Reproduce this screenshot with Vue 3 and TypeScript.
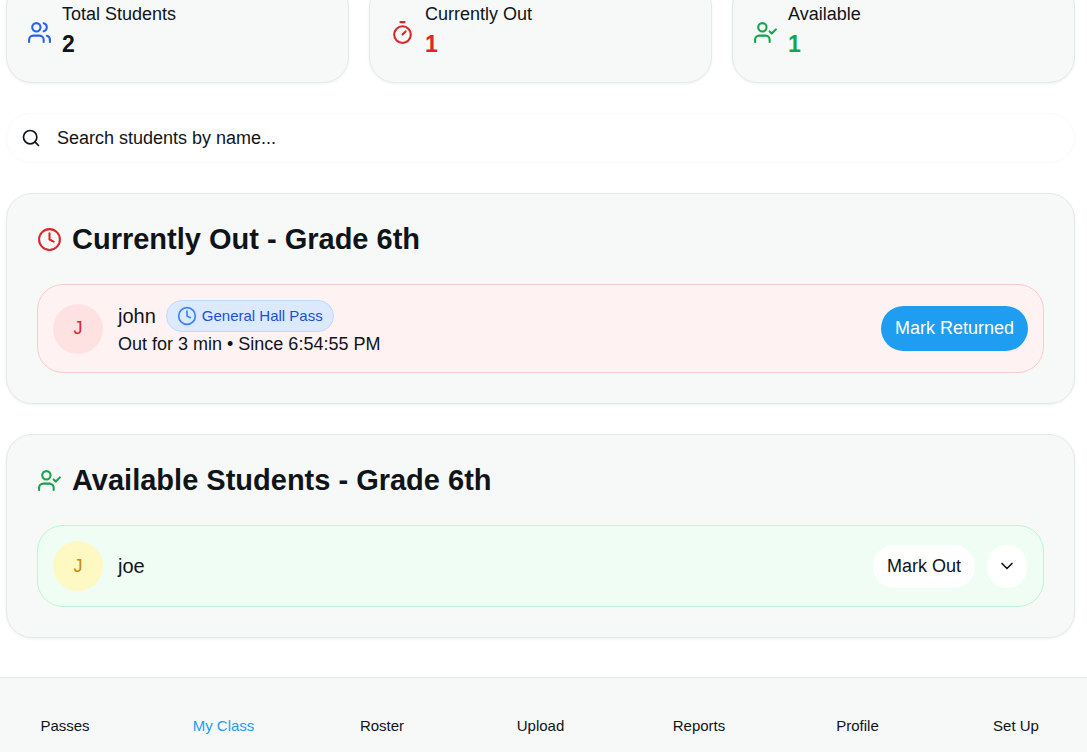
<script setup lang="ts">
import { ref } from 'vue'

type IconName = 'users' | 'timer' | 'userCheck' | 'clock' | 'search' | 'chevron'

const icons: Record<IconName, string[]> = {
  users: [
    'M16 21v-2a4 4 0 0 0-4-4H6a4 4 0 0 0-4 4v2',
    'M13 7a4 4 0 1 1-8 0a4 4 0 0 1 8 0',
    'M22 21v-2a4 4 0 0 0-3-3.87',
    'M16 3.13a4 4 0 0 1 0 7.75',
  ],
  timer: ['M10 2h4', 'M12 14l3-3', 'M20 14a8 8 0 1 1-16 0a8 8 0 0 1 16 0'],
  userCheck: [
    'M16 21v-2a4 4 0 0 0-4-4H6a4 4 0 0 0-4 4v2',
    'M13 7a4 4 0 1 1-8 0a4 4 0 0 1 8 0',
    'm16 11 2 2 4-4',
  ],
  clock: ['M22 12a10 10 0 1 1-20 0a10 10 0 0 1 20 0', 'M12 6v6l4 2'],
  search: ['M19 11a8 8 0 1 1-16 0a8 8 0 0 1 16 0', 'm21 21-4.3-4.3'],
  chevron: ['m6 9 6 6 6-6'],
}

interface Stat {
  label: string
  value: number
  icon: IconName
  iconTone: string
  valueTone: string
}

const stats: Stat[] = [
  { label: 'Total Students', value: 2, icon: 'users', iconTone: 'blue', valueTone: '' },
  { label: 'Currently Out', value: 1, icon: 'timer', iconTone: 'red', valueTone: 'red' },
  { label: 'Available', value: 1, icon: 'userCheck', iconTone: 'green', valueTone: 'green' },
]

const tabs = ['Passes', 'My Class', 'Roster', 'Upload', 'Reports', 'Profile', 'Set Up']
const activeTab = ref('My Class')
const query = ref('')
</script>

<template>
  <div class="page">
    <main class="content">
      <div class="stats">
        <div v-for="s in stats" :key="s.label" class="card stat">
          <svg class="icon" :class="s.iconTone" viewBox="0 0 24 24" aria-hidden="true">
            <path v-for="d in icons[s.icon]" :key="d" :d="d" />
          </svg>
          <div>
            <p class="stat-label">{{ s.label }}</p>
            <p class="stat-value" :class="s.valueTone">{{ s.value }}</p>
          </div>
        </div>
      </div>

      <label class="search">
        <svg class="icon small" viewBox="0 0 24 24" aria-hidden="true">
          <path v-for="d in icons.search" :key="d" :d="d" />
        </svg>
        <input v-model="query" type="text" placeholder="Search students by name..." aria-label="Search students by name" />
      </label>

      <section class="card group">
        <h2 class="title">
          <svg class="icon red" viewBox="0 0 24 24" aria-hidden="true">
            <path v-for="d in icons.clock" :key="d" :d="d" />
          </svg>
          Currently Out - Grade 6th
        </h2>
        <div class="row out">
          <span class="avatar">J</span>
          <div class="details">
            <div class="name-line">
              <span class="name">john</span>
              <span class="badge">
                <svg class="icon small" viewBox="0 0 24 24" aria-hidden="true">
                  <path v-for="d in icons.clock" :key="d" :d="d" />
                </svg>
                General Hall Pass
              </span>
            </div>
            <p class="since">Out for 3 min • Since 6:54:55 PM</p>
          </div>
          <button type="button" class="btn primary">Mark Returned</button>
        </div>
      </section>

      <section class="card group">
        <h2 class="title">
          <svg class="icon green" viewBox="0 0 24 24" aria-hidden="true">
            <path v-for="d in icons.userCheck" :key="d" :d="d" />
          </svg>
          Available Students - Grade 6th
        </h2>
        <div class="row available">
          <span class="avatar">J</span>
          <div class="details">
            <span class="name">joe</span>
          </div>
          <div class="actions">
            <button type="button" class="btn outline">Mark Out</button>
            <button type="button" class="btn outline square" aria-label="Choose destination">
              <svg class="icon small" viewBox="0 0 24 24" aria-hidden="true">
                <path v-for="d in icons.chevron" :key="d" :d="d" />
              </svg>
            </button>
          </div>
        </div>
      </section>
    </main>

    <nav class="tabs">
      <a
        v-for="t in tabs"
        :key="t"
        href="#"
        class="tab"
        :class="{ active: t === activeTab }"
        @click.prevent="activeTab = t"
      >{{ t }}</a>
    </nav>
  </div>
</template>

<style>
body {
  margin: 0;
  background: #ffffff;
}
</style>

<style scoped>
.page {
  display: flex;
  flex-direction: column;
  min-height: 100vh;
  overflow: hidden;
  font-family: "Liberation Sans", Arial, sans-serif;
  font-size: 18px;
  line-height: 25px;
  color: #0f1419;
}
.page * {
  box-sizing: border-box;
}
p,
h2 {
  margin: 0;
}
.content {
  display: flex;
  flex-direction: column;
  gap: 30px;
  margin-top: -19px;
  padding: 0 12px 39px 6px;
}
.card {
  background: #f7f8f8;
  border: 1px solid #e1eaef;
  border-radius: 26px;
  box-shadow: 0 1px 3px rgba(15, 20, 25, 0.06);
}
.stats {
  display: grid;
  grid-template-columns: repeat(3, 1fr);
  gap: 20px;
}
.stat {
  display: flex;
  align-items: center;
  gap: 10px;
  padding: 20px;
}
.stat-value {
  font-size: 23px;
  line-height: 35px;
  font-weight: 700;
}
.icon {
  display: block;
  flex: none;
  width: 25px;
  height: 25px;
  fill: none;
  stroke: currentColor;
  stroke-width: 2;
  stroke-linecap: round;
  stroke-linejoin: round;
}
.icon.small {
  width: 20px;
  height: 20px;
}
.blue {
  color: #2563eb;
}
.red {
  color: #dc2626;
}
.green {
  color: #16a34a;
}
.search {
  display: flex;
  align-items: center;
  gap: 16px;
  height: 50px;
  padding: 0 14px;
  border: 1px solid #f9f9fa;
  border-radius: 25px;
}
.search input {
  flex: 1;
  min-width: 0;
  padding: 0;
  border: 0;
  outline: 0;
  background: transparent;
  font: inherit;
  color: inherit;
}
.search input::placeholder {
  color: #0f1419;
  opacity: 1;
}
.group {
  display: flex;
  flex-direction: column;
  gap: 30px;
  padding: 30px;
}
.title {
  display: flex;
  align-items: center;
  gap: 10px;
  font-size: 29px;
  line-height: 30px;
  font-weight: 700;
}
.row {
  display: flex;
  align-items: center;
  gap: 15px;
  padding: 15px;
  border: 1px solid;
  border-radius: 26px;
}
.row.out {
  background: #fef2f2;
  border-color: #fecaca;
}
.row.available {
  background: #f0fdf4;
  border-color: #bbf7d0;
}
.avatar {
  display: flex;
  align-items: center;
  justify-content: center;
  flex: none;
  width: 50px;
  height: 50px;
  border-radius: 50%;
}
.out .avatar {
  background: #fee2e2;
  color: #dc2626;
}
.available .avatar {
  background: #fef9c3;
  color: #ca8a04;
}
.details {
  flex: 1;
  min-width: 0;
}
.name-line {
  display: flex;
  align-items: center;
  gap: 10px;
}
.name {
  display: block;
  font-size: 20px;
  line-height: 28px;
}
.badge {
  display: inline-flex;
  align-items: center;
  gap: 5px;
  padding: 5px 10px;
  border: 1px solid #bfdbfe;
  border-radius: 16px;
  background: #dbeafe;
  color: #1d4ed8;
  font-size: 15px;
  line-height: 20px;
}
.badge .icon {
  color: #3b82f6;
}
.actions {
  display: flex;
  gap: 10px;
}
.btn {
  display: flex;
  align-items: center;
  justify-content: center;
  height: 45px;
  padding: 0 14px;
  border: 0;
  border-radius: 23px;
  font: inherit;
  color: inherit;
  white-space: nowrap;
  cursor: pointer;
}
.btn.primary {
  background: #1e9df1;
  color: #ffffff;
}
.outline {
  border: 1px solid transparent;
  background: #ffffff;
  background-clip: padding-box;
}
.square {
  width: 42px;
  padding: 0;
}
.tabs {
  display: flex;
  justify-content: space-between;
  flex: 1;
  padding: 38px 31px 16px 25px;
  border-top: 1px solid #e1e8e8;
  background: #f7f8f8;
}
.tab {
  width: 80px;
  font-size: 15px;
  line-height: 20px;
  text-align: center;
  color: inherit;
  text-decoration: none;
}
.tab.active {
  color: #1e9df1;
}
</style>
